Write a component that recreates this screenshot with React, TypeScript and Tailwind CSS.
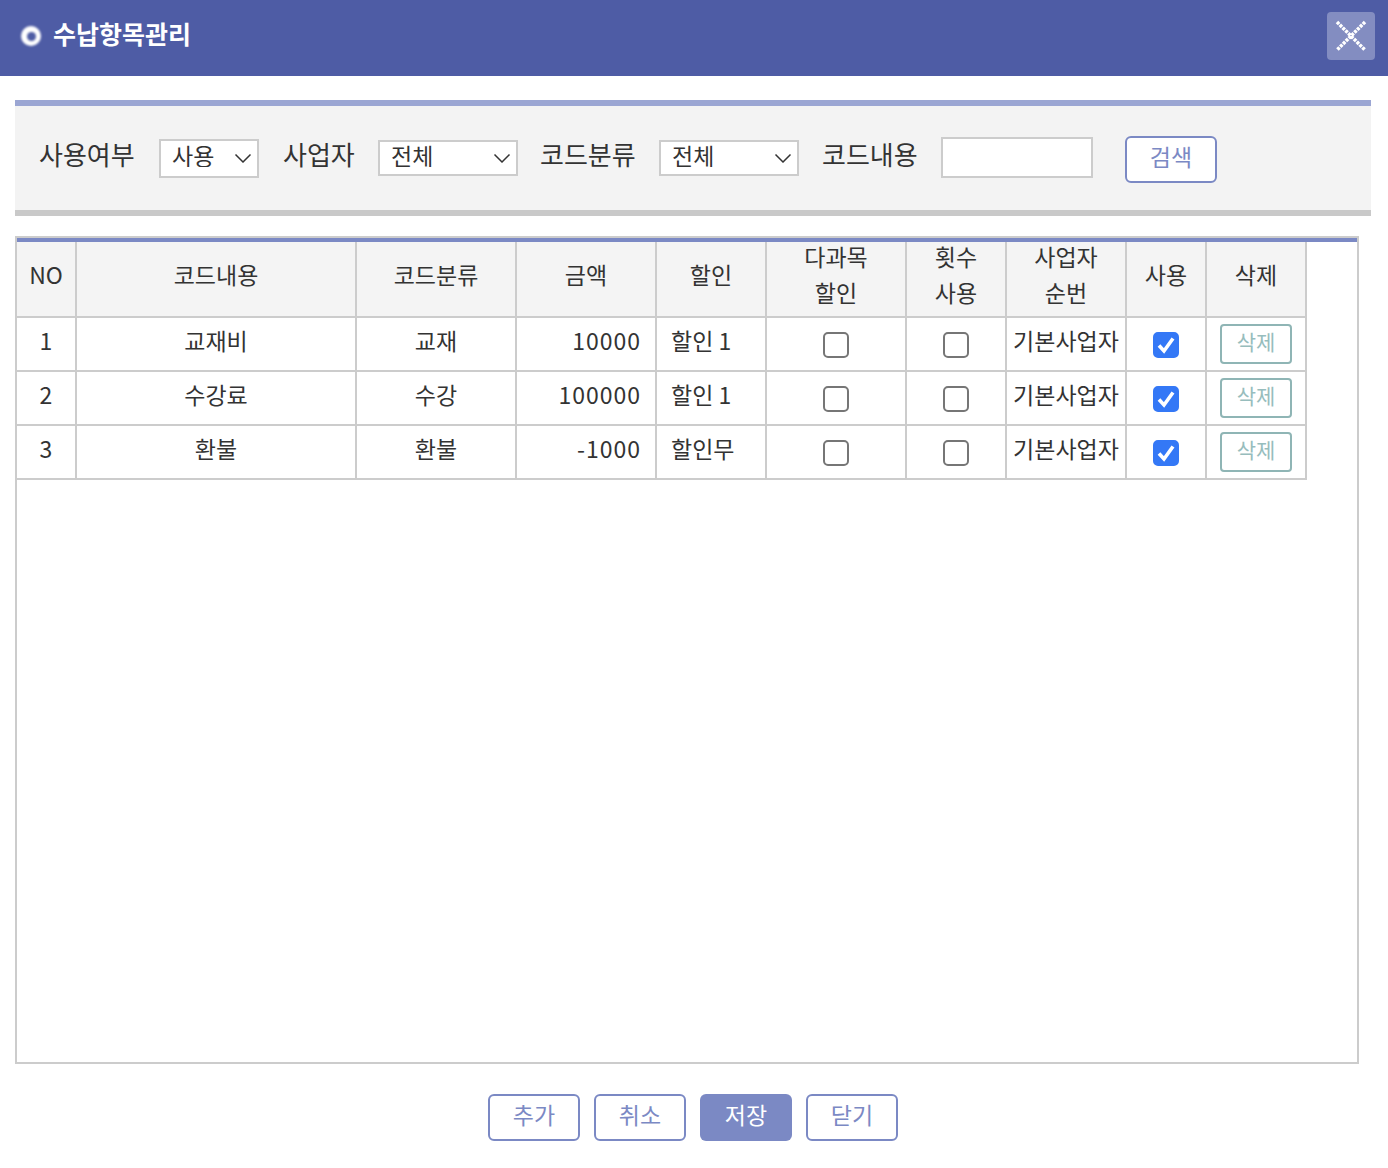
import React from "react";

const font = { fontFamily: '"Noto Sans CJK KR", "Noto Sans", sans-serif' };

const rows = [
  { no: 1, name: "교재비", type: "교재", price: "10000", sale: "할인 1" },
  { no: 2, name: "수강료", type: "수강", price: "100000", sale: "할인 1" },
  { no: 3, name: "환불", type: "환불", price: "-1000", sale: "할인무" },
];

const Chevron = () => (
  <svg className="pointer-events-none absolute right-[7px] top-1/2 -translate-y-1/2" width="18" height="10" viewBox="0 0 18 10" fill="none">
    <path d="M1.5 1.5 L9 9 L16.5 1.5" stroke="#333" strokeWidth="1.5" />
  </svg>
);

const Select = ({ label, className }: { label: string; className: string }) => (
  <div className={`relative shrink-0 ${className}`}>
    <select className="h-full w-full appearance-none border-2 border-[#cccccc] bg-white pl-[11px] pb-[6px] text-[23px] leading-none text-[#333] rounded-none outline-none">
      <option>{label}</option>
    </select>
    <Chevron />
  </div>
);

const OutlineBtn = ({ children }: { children: React.ReactNode }) => (
  <button className="flex h-[47px] w-[92px] items-center justify-center rounded-[6px] border-2 border-[#7b89c4] bg-white pb-[6px] text-[23px] leading-none text-[#7b89c4]">
    {children}
  </button>
);

const Th = ({ children }: { children: React.ReactNode }) => (
  <th className="border-r-2 border-b-2 border-[#cccccc] bg-[#f4f4f4] p-0 text-center align-middle font-normal text-[23px] leading-[36px] text-[#333]">
    <div className="-mt-[10px]">{children}</div>
  </th>
);

const td = "border-r-2 border-b-2 border-[#cccccc] h-[54px] p-0 text-center align-middle text-[23px] leading-none text-[#333]";
const tdText = `${td} pb-[8px]`;

const Check = ({ on }: { on?: boolean }) => (
  <span className="relative mt-[1px] inline-block h-[26px] w-[26px] align-middle">
    <input
      type="checkbox"
      defaultChecked={on}
      className="peer block h-[26px] w-[26px] appearance-none rounded-[5px] border-2 border-[#767676] bg-white checked:border-[#3478f6] checked:bg-[#3478f6]"
    />
    {on && (
      <svg className="pointer-events-none absolute left-0 top-0" width="26" height="26" viewBox="0 0 26 26" fill="none">
        <path d="M6 13.5 L11 19 L20 6.5" stroke="#fff" strokeWidth="3.6" />
      </svg>
    )}
  </span>
);

export default function App() {
  return (
    <div className="h-[1168px] w-[1388px] overflow-hidden bg-white" style={font}>
      {/* title bar */}
      <div className="flex h-[76px] items-center justify-between bg-[#4e5ca5] pb-[4px] pl-[21px] pr-[13px]">
        <div className="flex items-center gap-[12px]">
          <span className="flex h-[20px] w-[20px] items-center justify-center rounded-full bg-white blur-[1px]">
            <span className="h-[9px] w-[9px] rounded-full bg-[#4e5ca5]" />
          </span>
          <h1 className="pb-[6px] text-[25px] font-bold leading-none text-white">수납항목관리</h1>
        </div>
        <button className="flex h-[48px] w-[48px] items-center justify-center rounded-[4px] bg-[#838dc1]">
          <svg width="32" height="32" viewBox="0 0 32 32" fill="none">
            <path d="M2 2 L30 30 M30 2 L2 30" stroke="#fff" strokeWidth="3.5" strokeDasharray="3 1" />
          </svg>
        </button>
      </div>

      {/* search */}
      <div className="mx-[15px] mt-[24px] flex h-[116px] w-[1356px] items-center border-t-[6px] border-b-[6px] border-t-[#9ba6d3] border-b-[#c9c9c9] bg-[#f3f3f3] pl-[24px]">
        <span className="w-[96px] shrink-0 pb-[8px] text-[26px] leading-none whitespace-nowrap text-[#333]">사용여부</span>
        <Select label="사용" className="ml-[24px] h-[39px] w-[100px]" />
        <span className="ml-[24px] w-[72px] shrink-0 pb-[8px] text-[26px] leading-none whitespace-nowrap text-[#333]">사업자</span>
        <Select label="전체" className="ml-[23px] h-[36px] w-[140px]" />
        <span className="ml-[22px] w-[96px] shrink-0 pb-[8px] text-[26px] leading-none whitespace-nowrap text-[#333]">코드분류</span>
        <Select label="전체" className="ml-[23px] h-[36px] w-[140px]" />
        <span className="ml-[23px] w-[96px] shrink-0 pb-[8px] text-[26px] leading-none whitespace-nowrap text-[#333]">코드내용</span>
        <input className="mb-[2px] ml-[23px] h-[41px] w-[152px] shrink-0 border-2 border-[#cccccc] bg-white outline-none" />
        <div className="ml-[32px] mt-[2px]">
          <OutlineBtn>검색</OutlineBtn>
        </div>
      </div>

      {/* grid */}
      <div className="mx-[15px] mt-[20px] h-[828px] w-[1344px] border-2 border-[#cccccc] bg-white">
        <table className="table-fixed border-separate border-spacing-0 border-t-4 border-[#7b89c4] w-[1340px]">
          <colgroup>
            <col className="w-[60px]" />
            <col className="w-[280px]" />
            <col className="w-[160px]" />
            <col className="w-[140px]" />
            <col className="w-[110px]" />
            <col className="w-[140px]" />
            <col className="w-[100px]" />
            <col className="w-[120px]" />
            <col className="w-[80px]" />
            <col className="w-[100px]" />
            <col />
          </colgroup>
          <thead>
            <tr className="h-[76px]">
              <Th>NO</Th>
              <Th>코드내용</Th>
              <Th>코드분류</Th>
              <Th>금액</Th>
              <Th>할인</Th>
              <Th>다과목<br />할인</Th>
              <Th>횟수<br />사용</Th>
              <Th>사업자<br />순번</Th>
              <Th>사용</Th>
              <Th>삭제</Th>
              <th className="p-0" />
            </tr>
          </thead>
          <tbody>
            {rows.map((r) => (
              <tr key={r.no}>
                <td className={tdText}>{r.no}</td>
                <td className={tdText}>{r.name}</td>
                <td className={tdText}>{r.type}</td>
                <td className={`${tdText} !text-right !pr-[14px] tracking-[1px]`}>{r.price}</td>
                <td className={`${tdText} !text-left !pl-[14px]`}>{r.sale}</td>
                <td className={td}><Check /></td>
                <td className={td}><Check /></td>
                <td className={tdText}>기본사업자</td>
                <td className={td}><Check on /></td>
                <td className={td}>
                  <button className="inline-flex h-[40px] w-[72px] items-center justify-center rounded-[4px] border-2 border-[#8fb5b5] bg-white pb-[5px] text-[21px] leading-none text-[#97bdbd]">
                    삭제
                  </button>
                </td>
                <td className="p-0" />
              </tr>
            ))}
          </tbody>
        </table>
      </div>

      {/* footer buttons */}
      <div className="mt-[30px] flex justify-center gap-[14px] pr-[2px]">
        <OutlineBtn>추가</OutlineBtn>
        <OutlineBtn>취소</OutlineBtn>
        <button className="flex h-[47px] w-[92px] items-center justify-center rounded-[6px] bg-[#7b89c4] pb-[6px] text-[23px] leading-none text-white">
          저장
        </button>
        <OutlineBtn>닫기</OutlineBtn>
      </div>
    </div>
  );
}
